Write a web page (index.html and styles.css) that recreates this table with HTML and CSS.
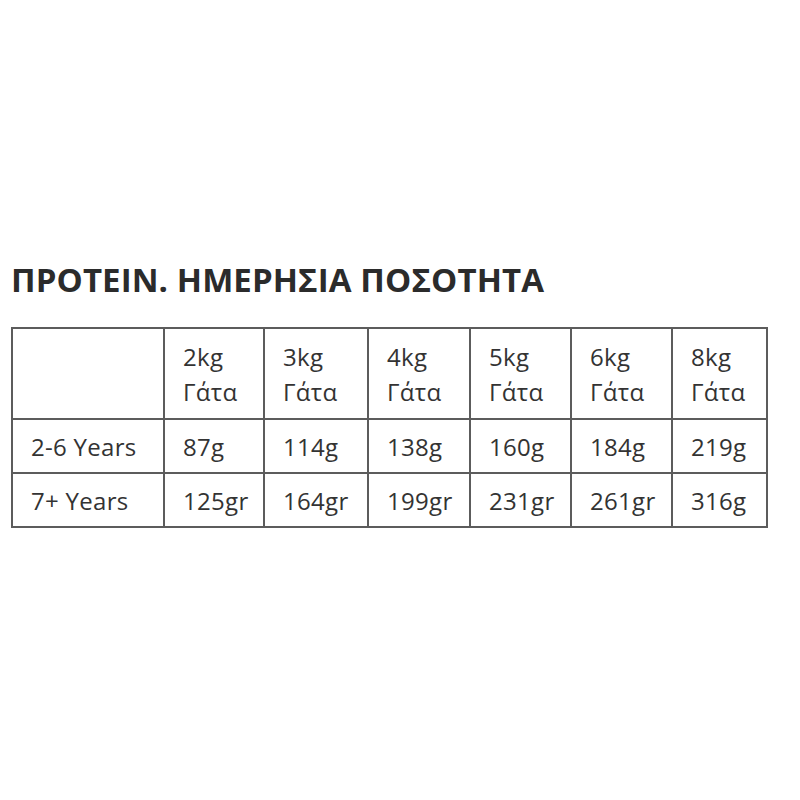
FILE: index.html
```html
<!DOCTYPE html>
<html>
<head>
<meta charset="utf-8">
<link rel="stylesheet" href="styles.css">
</head>
<body>
<div class="page">
  <h2 class="title">ΠΡΟΤΕΙΝ. ΗΜΕΡΗΣΙΑ ΠΟΣΟΤΗΤΑ</h2>
  <table class="grid">
    <colgroup>
      <col class="c0"><col class="c1"><col class="c2"><col class="c3"><col class="c4"><col class="c5"><col class="c6">
    </colgroup>
    <tr class="head">
      <td></td>
      <td>2kg<br>Γάτα</td>
      <td>3kg<br>Γάτα</td>
      <td>4kg<br>Γάτα</td>
      <td>5kg<br>Γάτα</td>
      <td>6kg<br>Γάτα</td>
      <td>8kg<br>Γάτα</td>
    </tr>
    <tr>
      <td>2-6 Years</td>
      <td>87g</td>
      <td>114g</td>
      <td>138g</td>
      <td>160g</td>
      <td>184g</td>
      <td>219g</td>
    </tr>
    <tr>
      <td>7+ Years</td>
      <td>125gr</td>
      <td>164gr</td>
      <td>199gr</td>
      <td>231gr</td>
      <td>261gr</td>
      <td>316g</td>
    </tr>
  </table>
</div>
</body>
</html>
```
FILE: styles.css
```css
html, body {
  margin: 0;
  padding: 0;
  background: #fff;
}
.page {
  padding: 260px 0 0 11px;
}
.title {
  margin: 0 0 27px 0;
  font-family: "Open Sans", "DejaVu Sans", sans-serif;
  font-weight: 700;
  font-size: 33px;
  letter-spacing: 0.1px;
  line-height: 40px;
  color: #2b2b2b;
}
.grid {
  border-collapse: collapse;
  table-layout: fixed;
  width: 755px;
  font-family: "Open Sans", "DejaVu Sans", sans-serif;
  font-size: 24px;
  letter-spacing: 0.3px;
  line-height: 35px;
  color: #333;
}
.grid td {
  border: 2px solid #5c5c5c;
  padding: 8.5px 0 8.5px 18px;
  vertical-align: middle;
  text-align: left;
  white-space: nowrap;
}
.grid .head td {
  padding-top: 10px;
  padding-bottom: 9px;
}
.c0 { width: 152px; }
.c1 { width: 100px; }
.c2 { width: 104px; }
.c3 { width: 102px; }
.c4 { width: 101px; }
.c5 { width: 101px; }
.c6 { width: 95px; }
```
